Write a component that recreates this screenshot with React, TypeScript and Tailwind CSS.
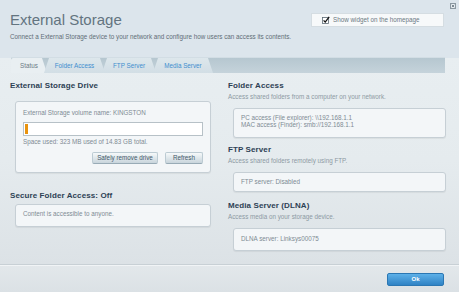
import React from "react";

const F = "font-['Liberation_Sans',Arial,sans-serif]";

function Tab({ label, active, w, first }: { label: string; active?: boolean; w: number; first?: boolean }) {
  return (
    <div
      style={{ width: w }}
      className={`h-[15px] flex items-center justify-center text-[6.3px] ${first ? "" : "-ml-[3px]"} ${
        active
          ? "bg-[#e9eff2] text-[#6b7a85] [clip-path:polygon(0_0,calc(100%_-_5px)_0,100%_100%,0_100%)] rounded-tl-[2px]"
          : "bg-gradient-to-b from-[#dde7ec] to-[#d2dee5] text-[#3f8fcf] [clip-path:polygon(5px_0,calc(100%_-_5px)_0,100%_100%,0_100%)]"
      }`}
    >
      {label}
    </div>
  );
}

function Heading({ children, className = "" }: { children: React.ReactNode; className?: string }) {
  return <div className={`text-[8px] leading-[10px] font-bold text-[#2d4154] tracking-[0.1px] ${className}`}>{children}</div>;
}

function Desc({ children }: { children: React.ReactNode }) {
  return <div className="mt-[2px] text-[6.3px] leading-[8px] text-[#8d9aa3]">{children}</div>;
}

function Card({ children, className = "" }: { children: React.ReactNode; className?: string }) {
  return (
    <div
      className={`ml-[5px] bg-[#f3f6f8] border border-[#c6cfd5] rounded-[3px] shadow-[0_1px_1px_rgba(0,0,0,0.06)] text-[6.3px] text-[#7e8b94] ${className}`}
    >
      {children}
    </div>
  );
}

function Btn({ children, w }: { children: React.ReactNode; w: number }) {
  return (
    <div
      style={{ width: w }}
      className="h-[12px] flex items-center justify-center rounded-[2px] border border-[#bccbd3] border-b-[#98abb6] bg-gradient-to-b from-[#f6f9fa] to-[#c8d5dc] text-[6.3px] text-[#44596a]"
    >
      {children}
    </div>
  );
}

export default function App() {
  return (
    <div className={`${F} relative w-[459px] h-[292px] flex flex-col overflow-hidden bg-[#dce5ec]`}>
      {/* close */}
      <div className="absolute top-[3px] right-[3px] w-[6px] h-[6px]">
        <svg width="6" height="6" viewBox="0 0 6 6">
          <rect x="0.5" y="0.5" width="5" height="5" fill="#e6ecf0" stroke="#8b98a1" strokeWidth="1" />
          <path d="M1.8 1.8 L4.2 4.2 M4.2 1.8 L1.8 4.2" stroke="#6f7d87" strokeWidth="0.9" />
        </svg>
      </div>

      {/* header */}
      <div className="h-[58px] flex shrink-0">
        <div className="pl-[10px] pt-[11px]">
          <div className="text-[15px] leading-[18px] text-[#637480]">External Storage</div>
          <div className="mt-[4px] text-[6.3px] leading-[8px] text-[#5f6d77] whitespace-nowrap">
            Connect a External Storage device to your network and configure how users can access its contents.
          </div>
        </div>
        <div className="ml-auto mr-[15px] mt-[13px] w-[133px] h-[14px] bg-[#f7f9fa] border border-[#d5dde2] flex items-center pl-[10px]">
          <svg width="8" height="8" viewBox="0 0 8 8" className="shrink-0">
            <rect x="0.5" y="1.5" width="6" height="6" fill="#fff" stroke="#5c6a74" strokeWidth="0.8" />
            <path d="M1.6 4.4 L3.2 6.1 L7.2 0.8" stroke="#111" strokeWidth="1.3" fill="none" />
          </svg>
          <span className="ml-[3px] text-[6.3px] leading-[8px] text-[#6b7882] whitespace-nowrap">Show widget on the homepage</span>
        </div>
      </div>

      {/* body */}
      <div className="flex-1 flex flex-col bg-gradient-to-b from-[#e8eef1] via-[#e5ebee] to-[#dce2e6]">
        <div className="ml-[11px] w-[434px] h-[15px] flex bg-gradient-to-b from-[#b6c7d0] to-[#c5d3db] shadow-[0_-1px_0_#d2dde4]">
          <Tab label="Status" active w={36} first />
          <Tab label="Folder Access" w={61} />
          <Tab label="FTP Server" w={54} />
          <Tab label="Media Server" w={60} />
        </div>

        <div className="flex pl-[10px]">
          {/* left column */}
          <div className="w-[201px] flex flex-col">
            <Heading className="mt-[8px]">External Storage Drive</Heading>
            <Card className="mt-[10px] h-[72px] pt-[7px] pl-[7px] pr-[7px]">
              <div className="leading-[8px]">External Storage volume name: KINGSTON</div>
              <div className="mt-[5px] h-[14px] bg-white border border-[#b7c1c7] p-[1px]">
                <div className="w-[3px] h-full bg-[#e8920e]" />
              </div>
              <div className="mt-[2px] leading-[8px]">Space used: 323 MB used of 14.83 GB total.</div>
              <div className="mt-[6px] flex justify-end gap-[7px]">
                <Btn w={66}>Safely remove drive</Btn>
                <Btn w={38}>Refresh</Btn>
              </div>
            </Card>
            <Heading className="mt-[18px]">Secure Folder Access: Off</Heading>
            <Card className="mt-[3px] h-[23px] pt-[5px] pl-[7px]">
              <div className="leading-[8px]">Content is accessible to anyone.</div>
            </Card>
          </div>

          {/* right column */}
          <div className="ml-[17px] w-[218px] flex flex-col">
            <Heading className="mt-[8px]">Folder Access</Heading>
            <Desc>Access shared folders from a computer on your network.</Desc>
            <Card className="mt-[7px] h-[30px] pt-[5px] pl-[7px]">
              <div className="leading-[7px]">PC access (File explorer): \\192.168.1.1</div>
              <div className="leading-[7px]">MAC access (Finder): smb://192.168.1.1</div>
            </Card>
            <Heading className="mt-[7px]">FTP Server</Heading>
            <Desc>Access shared folders remotely using FTP.</Desc>
            <Card className="mt-[7px] h-[20px] pt-[5px] pl-[7px]">
              <div className="leading-[8px]">FTP server: Disabled</div>
            </Card>
            <Heading className="mt-[9px]">Media Server (DLNA)</Heading>
            <Desc>Access media on your storage device.</Desc>
            <Card className="mt-[7px] h-[23px] pt-[6px] pl-[7px]">
              <div className="leading-[8px]">DLNA server: Linksys00075</div>
            </Card>
          </div>
        </div>
      </div>

      {/* footer */}
      <div className="h-[28px] shrink-0 border-t border-[#c8d0d5] bg-gradient-to-b from-[#e3e8eb] to-[#dbe1e5] flex justify-end items-start shadow-[inset_0_1px_0_#f1f4f6]">
        <div className="mt-[8px] mr-[15px] w-[57px] h-[13px] rounded-[2px] bg-gradient-to-b from-[#5db0e8] to-[#2f83c5] border border-[#2b77b3] flex items-center justify-center text-[6px] font-bold text-white">
          Ok
        </div>
      </div>
    </div>
  );
}
